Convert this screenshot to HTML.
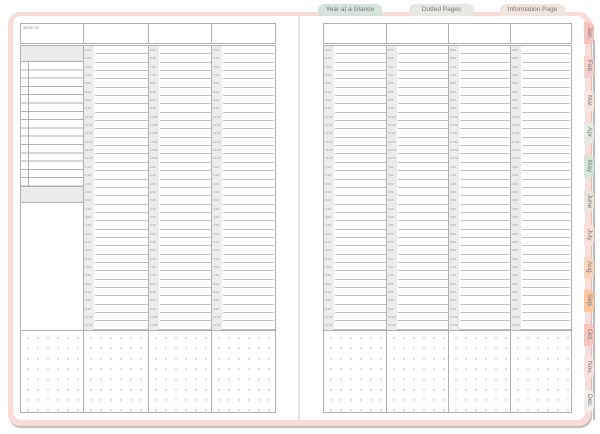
<!DOCTYPE html>
<html><head><meta charset="utf-8"><style>
*{margin:0;padding:0;box-sizing:border-box}
body{width:600px;height:434px;background:#fff;position:relative;overflow:hidden;font-family:"Liberation Sans",sans-serif}
.frame{position:absolute;left:8px;top:12px;width:583px;height:414px;background:#f9dcd7;border-radius:12px;box-shadow:1px 2px 1px #bbb}
.page{position:absolute;left:13px;top:16px;width:572px;height:404px;background:#fff;border-radius:8px}
.sep{position:absolute;left:298px;top:16px;width:2px;height:404px;background:#e2e2e2}
.tt{position:absolute;top:4px;height:12px;border-radius:6px 6px 0 0;font-size:6.5px;color:#777;text-align:center;line-height:12px}
.mt{position:absolute;left:584px;width:10px;height:22px;border-radius:0 5px 5px 0;writing-mode:vertical-rl;font-size:6.5px;color:#777;text-align:center;line-height:10px}
.shadow{position:absolute;left:593px;top:40px;width:2px;height:380px;background:#bbb}
.box{position:absolute;border:1px solid #b0b0b0}
.col{position:absolute;top:45px;height:285px;border:1px solid #b0b0b0;border-right:none}
.col i{display:block;height:8.35px;font-style:normal;font-size:3px;color:#999;position:relative;line-height:8px;padding-left:1px}
.col i::before{content:"";position:absolute;left:0;top:0;width:10px;height:100%;background:#ececec;z-index:-1}
.col i::after{content:"";position:absolute;left:11px;right:1px;bottom:0;border-bottom:1px solid #c2c2c2}
.col{z-index:1}
.dots{position:absolute;top:330px;height:83px;border:1px solid #b0b0b0;border-right:none;background-image:radial-gradient(circle,#aaa 0.6px,transparent 0.8px);background-size:10px 10.3px;background-position:2px 2px}
.wk{font-size:3.5px;color:#888;padding:2px}
</style></head><body>
<div class="frame"></div>
<div class="shadow"></div>
<div class="page"></div>
<div class="sep"></div>
<div class="tt" style="left:318px;width:64px;background:#d5e3dc">Year at a Glance</div>
<div class="tt" style="left:409px;width:65px;background:#e8e8e3">Dotted Pages</div>
<div class="tt" style="left:500px;width:65px;background:#f1e4db">Information Page</div>
<div class="mt" style="top:22px;background:#f8c3be">Jan.</div>
<div class="mt" style="top:56px;background:#f9cfca">Feb.</div>
<div class="mt" style="top:90px;background:#fbe8e5">Mar.</div>
<div class="mt" style="top:122px;background:#e6ebe6">Apr.</div>
<div class="mt" style="top:155px;background:#d4e6da">May</div>
<div class="mt" style="top:190px;background:#ebe5dd">June</div>
<div class="mt" style="top:224px;background:#fbe0da">July</div>
<div class="mt" style="top:257px;background:#fbd4bb">Aug.</div>
<div class="mt" style="top:290px;background:#fbc6a0">Sep.</div>
<div class="mt" style="top:324px;background:#f9c2ba">Oct.</div>
<div class="mt" style="top:356px;background:#fbe2de">Nov.</div>
<div class="mt" style="top:390px;background:#f1eeec">Dec.</div>

<div class="box wk" style="left:20px;top:23px;width:64px;height:21px">WEEK OF</div>
<div class="box" style="left:83px;top:23px;width:66px;height:21px"></div>
<div class="box" style="left:148px;top:23px;width:64px;height:21px"></div>
<div class="box" style="left:211px;top:23px;width:65px;height:21px"></div>
<div class="box" style="left:20px;top:45px;width:64px;height:286px;border-right:none"></div>
<div style="position:absolute;left:21px;top:46px;width:62px;height:16px;background:#ebebeb;border-bottom:1px solid #b0b0b0"></div>
<div style="position:absolute;left:21px;top:62px;width:62px;height:124px;background:repeating-linear-gradient(to bottom,transparent 0 7.3px,#b0b0b0 7.3px 8.3px)"></div>
<div style="position:absolute;left:28px;top:62px;width:1px;height:124px;background:#b0b0b0"></div>
<div style="position:absolute;left:21px;top:186px;width:62px;height:17px;background:#ebebeb;border-top:1px solid #b0b0b0;border-bottom:1px solid #b0b0b0"></div>

<div class="col" style="left:83px;width:66px"><i>6:00</i><i>6:30</i><i>7:00</i><i>7:30</i><i>8:00</i><i>8:30</i><i>9:00</i><i>9:30</i><i>10:00</i><i>10:30</i><i>11:00</i><i>11:30</i><i>12:00</i><i>12:30</i><i>1:00</i><i>1:30</i><i>2:00</i><i>2:30</i><i>3:00</i><i>3:30</i><i>4:00</i><i>4:30</i><i>5:00</i><i>5:30</i><i>6:00</i><i>6:30</i><i>7:00</i><i>7:30</i><i>8:00</i><i>8:30</i><i>9:00</i><i>9:30</i><i>10:00</i><i>10:30</i></div>
<div class="col" style="left:148px;width:64px"><i>6:00</i><i>6:30</i><i>7:00</i><i>7:30</i><i>8:00</i><i>8:30</i><i>9:00</i><i>9:30</i><i>10:00</i><i>10:30</i><i>11:00</i><i>11:30</i><i>12:00</i><i>12:30</i><i>1:00</i><i>1:30</i><i>2:00</i><i>2:30</i><i>3:00</i><i>3:30</i><i>4:00</i><i>4:30</i><i>5:00</i><i>5:30</i><i>6:00</i><i>6:30</i><i>7:00</i><i>7:30</i><i>8:00</i><i>8:30</i><i>9:00</i><i>9:30</i><i>10:00</i><i>10:30</i></div>
<div class="col" style="left:211px;width:65px;border-right:1px solid #b0b0b0"><i>6:00</i><i>6:30</i><i>7:00</i><i>7:30</i><i>8:00</i><i>8:30</i><i>9:00</i><i>9:30</i><i>10:00</i><i>10:30</i><i>11:00</i><i>11:30</i><i>12:00</i><i>12:30</i><i>1:00</i><i>1:30</i><i>2:00</i><i>2:30</i><i>3:00</i><i>3:30</i><i>4:00</i><i>4:30</i><i>5:00</i><i>5:30</i><i>6:00</i><i>6:30</i><i>7:00</i><i>7:30</i><i>8:00</i><i>8:30</i><i>9:00</i><i>9:30</i><i>10:00</i><i>10:30</i></div>
<div class="dots" style="left:20px;width:64px"></div>
<div class="dots" style="left:83px;width:66px"></div>
<div class="dots" style="left:148px;width:64px"></div>
<div class="dots" style="left:211px;width:65px;border-right:1px solid #b0b0b0"></div>

<div class="box" style="left:323px;top:23px;width:64px;height:21px"></div>
<div class="box" style="left:386px;top:23px;width:63px;height:21px"></div>
<div class="box" style="left:448px;top:23px;width:63px;height:21px"></div>
<div class="box" style="left:510px;top:23px;width:62px;height:21px"></div>
<div class="col" style="left:323px;width:64px"><i>6:00</i><i>6:30</i><i>7:00</i><i>7:30</i><i>8:00</i><i>8:30</i><i>9:00</i><i>9:30</i><i>10:00</i><i>10:30</i><i>11:00</i><i>11:30</i><i>12:00</i><i>12:30</i><i>1:00</i><i>1:30</i><i>2:00</i><i>2:30</i><i>3:00</i><i>3:30</i><i>4:00</i><i>4:30</i><i>5:00</i><i>5:30</i><i>6:00</i><i>6:30</i><i>7:00</i><i>7:30</i><i>8:00</i><i>8:30</i><i>9:00</i><i>9:30</i><i>10:00</i><i>10:30</i></div>
<div class="col" style="left:386px;width:63px"><i>6:00</i><i>6:30</i><i>7:00</i><i>7:30</i><i>8:00</i><i>8:30</i><i>9:00</i><i>9:30</i><i>10:00</i><i>10:30</i><i>11:00</i><i>11:30</i><i>12:00</i><i>12:30</i><i>1:00</i><i>1:30</i><i>2:00</i><i>2:30</i><i>3:00</i><i>3:30</i><i>4:00</i><i>4:30</i><i>5:00</i><i>5:30</i><i>6:00</i><i>6:30</i><i>7:00</i><i>7:30</i><i>8:00</i><i>8:30</i><i>9:00</i><i>9:30</i><i>10:00</i><i>10:30</i></div>
<div class="col" style="left:448px;width:63px"><i>6:00</i><i>6:30</i><i>7:00</i><i>7:30</i><i>8:00</i><i>8:30</i><i>9:00</i><i>9:30</i><i>10:00</i><i>10:30</i><i>11:00</i><i>11:30</i><i>12:00</i><i>12:30</i><i>1:00</i><i>1:30</i><i>2:00</i><i>2:30</i><i>3:00</i><i>3:30</i><i>4:00</i><i>4:30</i><i>5:00</i><i>5:30</i><i>6:00</i><i>6:30</i><i>7:00</i><i>7:30</i><i>8:00</i><i>8:30</i><i>9:00</i><i>9:30</i><i>10:00</i><i>10:30</i></div>
<div class="col" style="left:510px;width:62px;border-right:1px solid #b0b0b0"><i>6:00</i><i>6:30</i><i>7:00</i><i>7:30</i><i>8:00</i><i>8:30</i><i>9:00</i><i>9:30</i><i>10:00</i><i>10:30</i><i>11:00</i><i>11:30</i><i>12:00</i><i>12:30</i><i>1:00</i><i>1:30</i><i>2:00</i><i>2:30</i><i>3:00</i><i>3:30</i><i>4:00</i><i>4:30</i><i>5:00</i><i>5:30</i><i>6:00</i><i>6:30</i><i>7:00</i><i>7:30</i><i>8:00</i><i>8:30</i><i>9:00</i><i>9:30</i><i>10:00</i><i>10:30</i></div>
<div class="dots" style="left:323px;width:64px"></div>
<div class="dots" style="left:386px;width:63px"></div>
<div class="dots" style="left:448px;width:63px"></div>
<div class="dots" style="left:510px;width:62px;border-right:1px solid #b0b0b0"></div>
</body></html>
